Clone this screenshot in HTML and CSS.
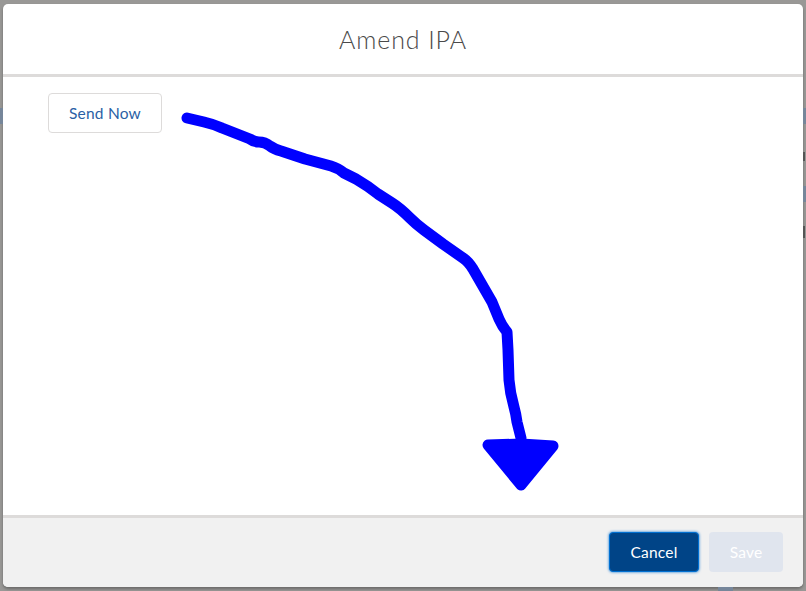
FILE: index.html
```html
<!DOCTYPE html>
<html lang="en">
  <head>
    <meta charset="utf-8" />
    <link rel="stylesheet" href="styles.css">
    <title>Amend IPA</title>
  </head>
  <body>
    <!-- bits of the page behind the modal that show in the margins -->
    <span class="mark mark-left-tab"></span>
    <span class="mark mark-right-tab-1"></span>
    <span class="mark mark-right-tab-2"></span>
    <span class="mark mark-right-dark-1"></span>
    <span class="mark mark-right-dark-2"></span>
    <span class="mark mark-bottom-tab"></span>

    <div class="modal">
      <div class="modal-header">Amend IPA</div>
      <div class="modal-body">
        <button type="button" class="btn btn-neutral">Send Now</button>
      </div>
      <div class="modal-footer">
        <button type="button" class="btn btn-brand">Cancel</button>
        <button type="button" class="btn btn-disabled">Save</button>
      </div>
      <svg class="scribble" width="806" height="591" viewBox="0 0 806 591">
        <path class="scribble-line" d="M187 118 L204 122 Q213 124 222 128 L250 139 Q254 142 259 142 Q265 142 270 146 Q274 149 281 151 L305 159 L331 166 Q338 168 344 173 L356 179 Q368 186 378 194 L392 203 Q400 208 410 218 Q416 224 424 230 L443 244 L463 258 Q468 261 473 269 L492 302 L499 319 Q502 326 507 332 L508 350 L509 380 Q510 393 514 407 Q516 414 517 422 L521 438" />
        <path class="scribble-head" d="M488 445 L521 444 L553 446 L521 485 Z" />
      </svg>
    </div>
  </body>
</html>
```

FILE: styles.css
```css
html,
body {
  height: 100%;
}
body {
  margin: 0;
  padding: 4px 3px;
  box-sizing: border-box;
  background-color: #999896;
  font-family: "Lato", sans-serif;
  overflow: hidden;
}
.mark {
  position: absolute;
  background-color: #76869a;
}
.mark-left-tab {
  left: 0;
  top: 108px;
  width: 3px;
  height: 16px;
}
.mark-right-tab-1 {
  right: 0;
  top: 108px;
  width: 3px;
  height: 16px;
}
.mark-right-tab-2 {
  right: 0;
  top: 186px;
  width: 3px;
  height: 16px;
}
.mark-right-dark-1 {
  right: 1px;
  top: 152px;
  width: 2px;
  height: 9px;
  background-color: #555;
}
.mark-right-dark-2 {
  right: 1px;
  top: 226px;
  width: 2px;
  height: 12px;
  background-color: #555;
}
.mark-bottom-tab {
  left: 718px;
  bottom: 0;
  width: 15px;
  height: 4px;
}
.modal {
  display: flex;
  flex-direction: column;
  height: 583px;
  border-radius: 5px;
  overflow: hidden;
  background-color: #fff;
  box-shadow: 0 2px 3px rgba(0, 0, 0, 0.3);
}
.modal-header {
  flex: 0 0 70px;
  display: flex;
  align-items: center;
  justify-content: center;
  border-bottom: 3px solid #dddbda;
  font-size: 25px;
  font-weight: 300;
  letter-spacing: 0.9px;
  color: #4a4a4a;
}
.modal-body {
  flex: 1;
  padding: 16px 45px;
}
.modal-footer {
  flex: 0 0 72px;
  display: flex;
  align-items: center;
  justify-content: flex-end;
  gap: 10px;
  padding: 0 20px 1px 0;
  box-sizing: border-box;
  border-top: 3px solid #dddbda;
  background-color: #f1f1f1;
}
.btn {
  height: 40px;
  border-radius: 4px;
  font-family: inherit;
  font-size: 15.5px;
  letter-spacing: 0.2px;
  padding: 0;
}
.btn-neutral {
  width: 114px;
  border: 1px solid #dddbda;
  background-color: #fff;
  color: #2b5fa5;
}
.btn-brand {
  width: 90px;
  border: 1px solid #0070d2;
  background-color: #004487;
  box-shadow: 0 0 3px #0070d2;
  color: #fff;
}
.btn-disabled {
  width: 74px;
  border: 0;
  background-color: #e0e5ee;
  color: #fff;
}
.scribble {
  position: absolute;
  top: 0;
  left: 0;
  pointer-events: none;
}
.scribble-line {
  fill: none;
  stroke: #0000ff;
  stroke-width: 11;
  stroke-linecap: round;
  stroke-linejoin: round;
}
.scribble-head {
  fill: #0000ff;
  stroke: #0000ff;
  stroke-width: 11;
  stroke-linejoin: round;
}
```
